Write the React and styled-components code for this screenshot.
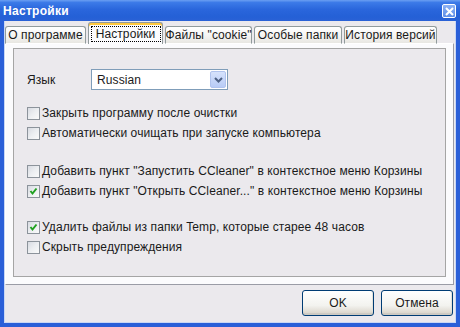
import React from "react";
import styled, { createGlobalStyle } from "styled-components";

const GlobalStyle = createGlobalStyle`
  html, body {
    margin: 0;
    padding: 0;
    background: #ffffff;
  }
  * {
    box-sizing: border-box;
  }
`;

const tabs = [
  { label: "О программе", width: 81 },
  { label: "Настройки", width: 75, active: true },
  { label: 'Файлы "cookie"', width: 87 },
  { label: "Особые папки", width: 88 },
  { label: "История версий", width: 93 },
];

const sections = [
  {
    top: 13,
    items: [
      { label: "Закрыть программу после очистки" },
      { label: "Автоматически очищать при запуске компьютера" },
    ],
  },
  {
    top: 18,
    items: [
      { label: 'Добавить пункт "Запустить CCleaner" в контекстное меню Корзины' },
      {
        label: 'Добавить пункт "Открыть CCleaner..." в контекстное меню Корзины',
        checked: true,
      },
    ],
  },
  {
    top: 16,
    items: [
      { label: "Удалить файлы из папки Temp, которые старее 48 часов", checked: true },
      { label: "Скрыть предупреждения" },
    ],
  },
];

export default function App() {
  return (
    <>
      <GlobalStyle />
      <Window>
        <TitleBar>
          <Title>Настройки</Title>
          <CloseButton>
            <svg width="9" height="9" viewBox="0 0 9 9">
              <path d="M1 1 L8 8 M8 1 L1 8" stroke="#ffffff" strokeWidth="2" />
            </svg>
          </CloseButton>
        </TitleBar>
        <Body>
          <TabRow>
            {tabs.map((tab) => (
              <Tab key={tab.label} $width={tab.width} $active={tab.active}>
                {tab.active ? <Focus>{tab.label}</Focus> : tab.label}
              </Tab>
            ))}
          </TabRow>
          <Panel>
            <GroupBox>
              <LangRow>
                <LangLabel>Язык</LangLabel>
                <Select>
                  <SelectValue>Russian</SelectValue>
                  <SelectArrow>
                    <svg width="9" height="6" viewBox="0 0 9 6">
                      <path
                        d="M1 1 L4.5 4.5 L8 1"
                        fill="none"
                        stroke="#4d6185"
                        strokeWidth="2"
                      />
                    </svg>
                  </SelectArrow>
                </Select>
              </LangRow>
              {sections.map((section, idx) => (
                <Section key={`section-${idx}`} $top={section.top}>
                  {section.items.map((item) => (
                    <CheckRow key={item.label}>
                      <Box>
                        {item.checked && (
                          <svg width="11" height="11" viewBox="0 0 11 11">
                            <path
                              d="M2.5 5 L4.5 7.5 L8.5 2.5"
                              fill="none"
                              stroke="#21a121"
                              strokeWidth="2"
                            />
                          </svg>
                        )}
                      </Box>
                      {item.label}
                    </CheckRow>
                  ))}
                </Section>
              ))}
            </GroupBox>
          </Panel>
          <Footer>
            <Button>OK</Button>
            <Button>Отмена</Button>
          </Footer>
        </Body>
      </Window>
    </>
  );
}

const Window = styled.div`
  width: 460px;
  height: 327px;
  display: flex;
  flex-direction: column;
  background: #2a5fd8;
  font-family: "Liberation Sans", Arial, sans-serif;
  font-size: 12px;
  letter-spacing: 0.1px;
  color: #1a1a1a;
`;

const TitleBar = styled.div`
  height: 21px;
  flex: none;
  display: flex;
  align-items: center;
  justify-content: space-between;
  padding: 0 4px 0 3px;
  background: linear-gradient(
    180deg,
    #6b9ff2 0%,
    #3c7ae8 12%,
    #2a66dc 45%,
    #2460d6 80%,
    #2a62d6 100%
  );
`;

const Title = styled.span`
  color: #ffffff;
  font-weight: bold;
  font-size: 12px;
  letter-spacing: 0.3px;
`;

const CloseButton = styled.div`
  width: 14px;
  height: 14px;
  display: flex;
  align-items: center;
  justify-content: center;
  border: 1px solid #ffffff;
  border-radius: 2px;
  background: linear-gradient(180deg, #8db2f4 0%, #5f8fe8 100%);
  margin-top: 1px;
`;

const Body = styled.div`
  flex: 1;
  display: flex;
  flex-direction: column;
  margin: 0 4px 4px 4px;
  background: #ebe9ed;
  box-shadow: inset 1px 0 0 #c8d7f5, inset -1px 0 0 #c8d7f5, inset 0 -1px 0 #c8d7f5;
  padding: 1px 2px 0 1px;
`;

const TabRow = styled.div`
  height: 22px;
  display: flex;
  align-items: flex-end;
  gap: 2px;
  position: relative;
  z-index: 1;
`;

const Tab = styled.div`
  width: ${(p) => p.$width}px;
  height: ${(p) => (p.$active ? 22 : 18)}px;
  display: flex;
  align-items: center;
  justify-content: center;
  border: 1px solid #919b9c;
  border-bottom: ${(p) => (p.$active ? "none" : "1px solid #ffffff")};
  border-radius: 3px 3px 0 0;
  background: ${(p) =>
    p.$active
      ? "#fcfcfe"
      : "linear-gradient(180deg, #ffffff 0%, #f6f5f4 50%, #e8e7e2 100%)"};
  box-shadow: ${(p) =>
    p.$active ? "inset 0 2px 0 #ffc83c, inset 0 1px 0 #e68b2c" : "none"};
  white-space: nowrap;
  padding-top: ${(p) => (p.$active ? 1 : 0)}px;
`;

const Focus = styled.span`
  display: flex;
  align-items: center;
  justify-content: center;
  width: 70px;
  height: 16px;
  border: 1px dotted #000000;
`;

const Panel = styled.div`
  height: 242px;
  margin-top: -1px;
  border-top: 1px solid #ffffff;
  border-left: 1px solid #ffffff;
  border-right: 1px solid #9a9ca6;
  border-bottom: 1px solid #9a9ca6;
  background: #fbfbfd;
  padding: 4px 7px 7px 7px;
`;

const GroupBox = styled.div`
  height: 100%;
  border: 1px solid #a5a5a5;
  background: #ebe9ed;
  padding: 20px 14px 0 13px;
`;

const LangRow = styled.div`
  display: flex;
  align-items: center;
  height: 21px;
`;

const LangLabel = styled.span`
  width: 64px;
`;

const Select = styled.div`
  width: 137px;
  height: 21px;
  display: flex;
  align-items: center;
  justify-content: space-between;
  border: 1px solid #7f9db9;
  background: #ffffff;
  padding: 1px;
`;

const SelectValue = styled.span`
  padding-left: 4px;
`;

const SelectArrow = styled.div`
  width: 16px;
  height: 17px;
  display: flex;
  align-items: center;
  justify-content: center;
  border: 1px solid #b0c3ee;
  border-radius: 2px;
  background: linear-gradient(180deg, #d6e2fc 0%, #b7cbf6 100%);
`;

const Section = styled.div`
  margin-top: ${(p) => p.$top}px;
  display: flex;
  flex-direction: column;
`;

const CheckRow = styled.div`
  height: 20px;
  display: flex;
  align-items: center;
  gap: 2px;
  white-space: nowrap;
`;

const Box = styled.span`
  width: 13px;
  height: 13px;
  flex: none;
  display: flex;
  align-items: center;
  justify-content: center;
  border: 1px solid #8c939b;
  background: linear-gradient(135deg, #d8dbe2 0%, #eceef1 50%, #fafafa 100%);
`;

const Footer = styled.div`
  flex: 1;
  display: flex;
  justify-content: flex-end;
  align-items: flex-start;
  gap: 7px;
  padding: 5px 1px 0 0;
`;

const Button = styled.div`
  width: 72px;
  height: 26px;
  display: flex;
  align-items: center;
  justify-content: center;
  border: 1px solid #003c74;
  border-radius: 3px;
  background: linear-gradient(180deg, #ffffff 0%, #f3f3ef 60%, #d6d0c5 100%);
  box-shadow: inset 0 -2px 0 #cdcac3, inset -1px 0 0 #e4e1da;
`;
